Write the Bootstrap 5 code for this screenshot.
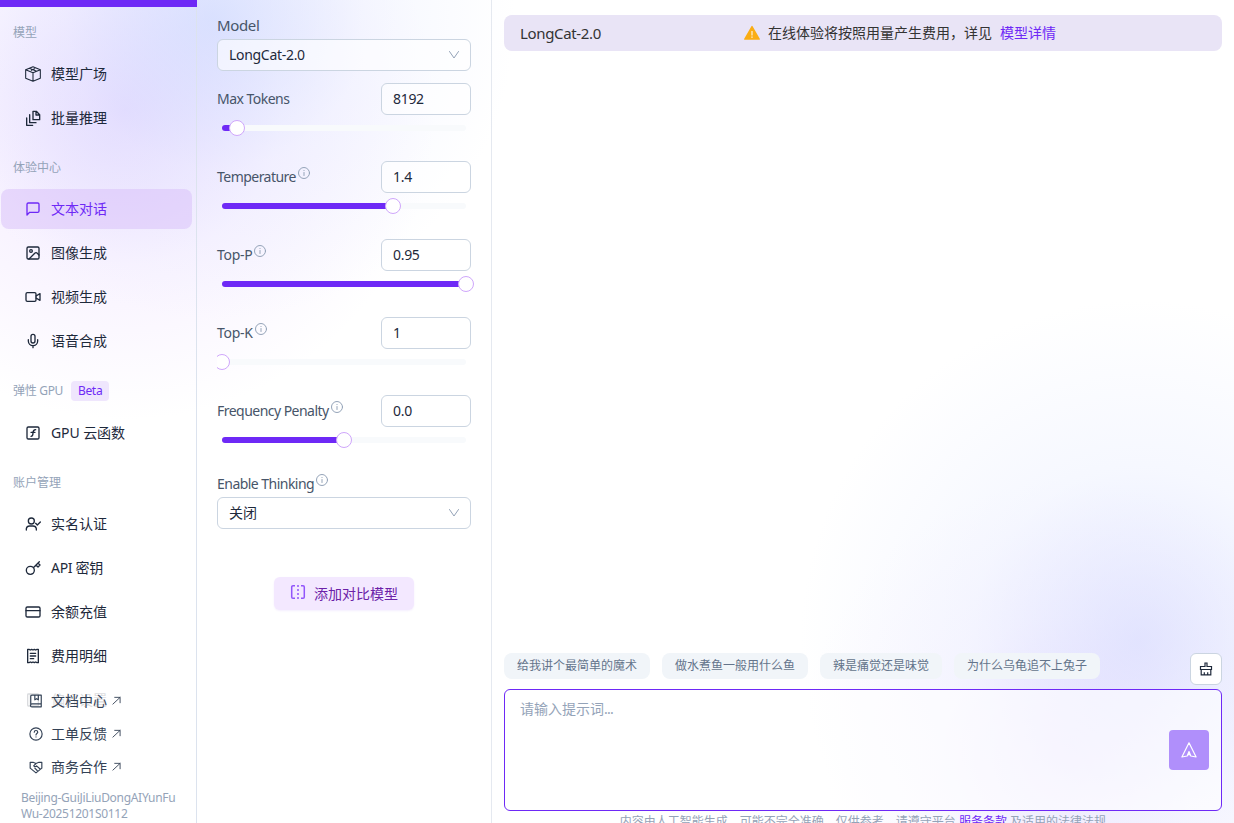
<!DOCTYPE html>
<html lang="zh-CN">
<head>
<meta charset="utf-8">
<meta name="viewport" content="width=device-width, initial-scale=1">
<title>LongCat-2.0</title>
<link href="https://cdn.jsdelivr.net/npm/bootstrap@5.3.0/dist/css/bootstrap.min.css" rel="stylesheet">
<style>
html,body{height:100%;overflow:hidden}
body{font-family:"Noto Sans","Noto Sans CJK SC",sans-serif;font-size:14px;line-height:20px;color:#1e293b;
background:
radial-gradient(circle 300px at 215px 20px,rgba(199,215,254,.6),rgba(224,231,255,.3) 50%,rgba(255,255,255,0)),
radial-gradient(circle 310px at 125px 110px,rgba(205,180,254,.5),rgba(230,210,255,.27) 50%,rgba(255,255,255,0)),
radial-gradient(circle 340px at 1140px 640px,rgba(205,210,254,.55),rgba(224,231,255,.3) 50%,rgba(255,255,255,0)),
radial-gradient(circle 270px at 1070px 750px,rgba(225,200,255,.42),rgba(240,228,255,.22) 50%,rgba(255,255,255,0)),#fff}
svg{display:block;flex:none;fill:none;stroke:currentColor;stroke-width:2;stroke-linecap:round;stroke-linejoin:round}
.side{width:197px;border-right:1px solid #dce3ee;flex:none}
.topbar{height:7px;width:197px;background:#6e29f6;flex:none}
.side-head{height:47px;padding:4px 0 0 13px;font-size:12px;color:#94a3b8;display:flex;align-items:center;flex:none}
.side-item{height:40px;margin:0 4px 4px 1px;padding-left:24px;gap:10px;display:flex;align-items:center;border-radius:8px;color:#1e293b;text-decoration:none;flex:none}
.side-item svg{width:16px;height:16px}
.side-item.active{background:rgba(216,190,250,.5);color:#6e29f6}
.side-item.fading{opacity:.16;margin-bottom:-40px}
.thin{stroke-width:1.6}
.beta{font-size:12px;background:#efe6fd;color:#6e29f6;border-radius:4px;height:20px;width:38px;margin-left:8px;text-align:center;letter-spacing:-.3px}
.foot-link{height:33px;padding-left:29px;gap:8px;display:flex;align-items:center;color:#334155;text-decoration:none;flex:none;position:relative}
.foot-link svg{width:14px;height:14px}
.foot-link svg.arr{width:9px;height:9px;margin-left:-3px;stroke-width:1}
.region{font-size:12px;line-height:16px;color:#94a3b8;padding:7px 0 1px 21px;letter-spacing:-.3px}
.conf{width:295px;border-right:1px solid #e5e9f0;padding:15px 20px 0;flex:none;color:#475569}
.lat{letter-spacing:-.3px}
.lbl{letter-spacing:-.53px}
.name{font-size:15px;letter-spacing:-.35px}
.box{height:32px;border:1px solid #cbd5e1;border-radius:6px;padding:0 10px 0 11px;display:flex;align-items:center;color:#1e293b;background:rgba(255,255,255,.6)}
.num{width:90px}
.chev{width:12px;height:12px;stroke:#94a3b8;stroke-width:1}
.param{height:78px}
.info{width:12px;height:12px;stroke:#94a3b8;stroke-width:1;margin:-9px 0 0 2px}
.slide{height:6px;margin:10px 5px 0;border-radius:3px;background:#f8fafc;position:relative}
.slide-fill{height:6px;border-radius:3px;background:#6e29f6}
.knob{position:absolute;top:-5px;width:16px;height:16px;margin-left:-8px;border-radius:50%;background:#fff;border:1px solid #cfa6fb}
.knob.start{clip-path:inset(0 0 0 3px)}
.think{height:24px;padding-bottom:2px}
.add{width:140px;height:33px;background:#f3e8ff;color:#6b21a8;border-radius:6px;gap:8px;box-shadow:0 1px 2px rgba(110,41,246,.08)}
.split{width:16px;height:16px;stroke:#9155fb;stroke-width:1.5;stroke-linecap:butt;margin-top:-3px}
.main{padding:15px 12px 0 12px;min-width:0}
.banner{height:36px;border-radius:8px;background:#e9e4f6;color:#333;padding:0 16px}
.banner .name{width:224px}
.hint{height:26px;border-radius:8px;background:#f1f5f9;color:#64748b;font-size:12px;padding:0 13px;display:flex;align-items:center;white-space:nowrap}
.clear{width:32px;height:32px;border:1px solid #cbd5e1;border-radius:6px;background:#fff}
.ask{height:122px;border:1px solid #6e29f6;border-radius:6px;background:rgba(255,255,255,.6);color:#94a3b8;padding:9px 12px 0 15px;margin-top:4px}
.send{width:40px;height:40px;background:#b08ffb;border-radius:4px;color:#fff;margin-top:31px}
.legal{font-size:12px;line-height:18px;height:10px;color:#94a3b8;margin-top:2px;white-space:nowrap}
.purple{color:#6e29f6;text-decoration:none}
</style>
</head>
<body>
<div class="d-flex vh-100 overflow-hidden">
<nav class="side d-flex flex-column">
  <div class="topbar"></div>
  <div class="side-head">模型</div>
  <a class="side-item" href="#"><svg class="thin" viewBox="0 0 24 24"><path d="M12 1 23 5.500v13L12 23 1 18.500V5.500zM1 5.500 12 10l11-4.500M12 10v13M6.500 3.500l11 4.300M9.500 6.500l5-2.500"/></svg>模型广场</a>
  <a class="side-item" href="#"><svg viewBox="0 0 24 24"><path d="M12 2h5l5 5v7.500H12zM16.500 2v5.500H22M7 7v12h9.500M2.500 12v11h9"/></svg>批量推理</a>
  <div class="side-head">体验中心</div>
  <a class="side-item active" href="#"><svg viewBox="0 0 24 24"><path d="M3 21V5a2 2 0 0 1 2-2h14a2 2 0 0 1 2 2v10a2 2 0 0 1-2 2H7z"/></svg>文本对话</a>
  <a class="side-item" href="#"><svg viewBox="0 0 24 24"><rect x="3" y="3" width="18" height="18" rx="2"/><circle cx="9" cy="9" r="2"/><path d="m21 15-3-3a2 2 0 0 0-3 0l-9 9"/></svg>图像生成</a>
  <a class="side-item" href="#"><svg viewBox="0 0 24 24"><rect x="1.500" y="5.500" width="15" height="13" rx="2"/><path d="m16.500 10.500 6-3.500v10l-6-3.500"/></svg>视频生成</a>
  <a class="side-item" href="#"><svg viewBox="0 0 24 24"><rect x="9" y="2" width="6" height="13" rx="3"/><path d="M5 10v2a7 7 0 0 0 14 0v-2M12 19v3"/></svg>语音合成</a>
  <div class="side-head" style="height:48px"><span class="lat">弹性 GPU</span><span class="beta">Beta</span></div>
  <a class="side-item" href="#"><svg viewBox="0 0 24 24"><rect x="3" y="3" width="18" height="18" rx="2"/><path d="M9 17c3 0 3-2 3-5s1-5 4-5M9 11h6"/></svg><span style="letter-spacing:-.1px">GPU 云函数</span></a>
  <div class="side-head">账户管理</div>
  <a class="side-item" href="#"><svg viewBox="0 0 24 24"><circle cx="9.500" cy="7.500" r="4.500"/><path d="M2 21v-2a5 5 0 0 1 5-4h5a5 5 0 0 1 5 4v2M16 11l2.500 2.500L23 9"/></svg>实名认证</a>
  <a class="side-item" href="#"><svg viewBox="0 0 24 24"><circle cx="8" cy="15.500" r="6"/><path d="M12.500 11.500 21.500 2.500M16.500 7.500l3 3 3-3-3-3"/></svg><span class="lat">API 密钥</span></a>
  <a class="side-item" href="#"><svg viewBox="0 0 24 24"><rect x="1.500" y="4.500" width="21" height="15" rx="2"/><path d="M1.500 10h21"/></svg>余额充值</a>
  <a class="side-item" href="#"><svg viewBox="0 0 24 24"><path d="M4 2v20h2l2-1 2 1 2-1 2 1 2-1 2 1h2V2h-2l-2 1-2-1-2 1-2-1-2 1-2-1zM8 8h8M8 12h8M8 16h5"/></svg>费用明细</a>
  <a class="side-item fading" href="#"><svg viewBox="0 0 24 24"><rect x="4" y="3" width="16" height="18" rx="1"/><path d="M8 3v18"/></svg>偏好设置</a>
  <div class="mt-auto">
    <a class="foot-link" href="#"><svg viewBox="0 0 24 24"><path d="M3 19V4a2 2 0 0 1 2-2h16v20H5a2 2 0 0 1 0-5h16M10 2v8l3-2 3 2V2"/></svg>文档中心<svg class="arr" viewBox="0 0 10 10"><path d="M1 9 9 1.500M3 1.500h6v6"/></svg></a>
    <a class="foot-link" href="#"><svg viewBox="0 0 24 24"><circle cx="12" cy="12" r="10.500"/><path d="M9 9a3 3 0 0 1 6 0c0 2-3 2.500-3 4.500M12 17v.2"/></svg>工单反馈<svg class="arr" viewBox="0 0 10 10"><path d="M1 9 9 1.500M3 1.500h6v6"/></svg></a>
    <a class="foot-link" href="#"><svg viewBox="0 0 24 24"><path d="M2 4h5l5 2 5-2h5v10l-10 8-10-8zM12 6 8 10c2 2 4 1 5 0l6 5.500M10 14l4 4"/></svg>商务合作<svg class="arr" viewBox="0 0 10 10"><path d="M1 9 9 1.500M3 1.500h6v6"/></svg></a>
    <div class="region">Beijing-GuiJiLiuDongAIYunFu<br>Wu-20251201S0112</div>
  </div>
</nav>

<section class="conf">
  <div class="name" style="height:24px">Model</div>
  <div class="box justify-content-between lat"><span>LongCat-2.0</span><svg class="chev" viewBox="0 0 12 12"><path d="m1.500 2.500 4.500 6.500 4.500-6.500"/></svg></div>
  <div class="param" style="margin-top:12px"><div class="d-flex justify-content-between align-items-center"><span class="lbl">Max Tokens</span><div class="box num lat">8192</div></div>
    <div class="slide"><div class="slide-fill" style="width:6%"></div><i class="knob" style="left:6%"></i></div></div>
  <div class="param"><div class="d-flex justify-content-between align-items-center"><span class="d-flex align-items-center"><span class="lbl">Temperature</span><svg class="info" viewBox="0 0 12 12"><circle cx="6" cy="6" r="5.500"/><path d="M6 5.500v3M6 3.400v.1"/></svg></span><div class="box num lat">1.4</div></div>
    <div class="slide"><div class="slide-fill" style="width:70%"></div><i class="knob" style="left:70%"></i></div></div>
  <div class="param"><div class="d-flex justify-content-between align-items-center"><span class="d-flex align-items-center"><span class="lat">Top-P</span><svg class="info" viewBox="0 0 12 12"><circle cx="6" cy="6" r="5.500"/><path d="M6 5.500v3M6 3.400v.1"/></svg></span><div class="box num lat">0.95</div></div>
    <div class="slide"><div class="slide-fill" style="width:100%"></div><i class="knob" style="left:100%"></i></div></div>
  <div class="param"><div class="d-flex justify-content-between align-items-center"><span class="d-flex align-items-center"><span class="lat">Top-K</span><svg class="info" viewBox="0 0 12 12"><circle cx="6" cy="6" r="5.500"/><path d="M6 5.500v3M6 3.400v.1"/></svg></span><div class="box num lat">1</div></div>
    <div class="slide"><i class="knob start" style="left:0%"></i></div></div>
  <div class="param"><div class="d-flex justify-content-between align-items-center"><span class="d-flex align-items-center"><span class="lbl">Frequency Penalty</span><svg class="info" viewBox="0 0 12 12"><circle cx="6" cy="6" r="5.500"/><path d="M6 5.500v3M6 3.400v.1"/></svg></span><div class="box num lat">0.0</div></div>
    <div class="slide"><div class="slide-fill" style="width:50%"></div><i class="knob" style="left:50%"></i></div></div>
  <div class="think d-flex align-items-center"><span class="lbl">Enable Thinking</span><svg class="info" viewBox="0 0 12 12"><circle cx="6" cy="6" r="5.500"/><path d="M6 5.500v3M6 3.400v.1"/></svg></div>
  <div class="box justify-content-between"><span>关闭</span><svg class="chev" viewBox="0 0 12 12"><path d="m1.500 2.500 4.500 6.500 4.500-6.500"/></svg></div>
  <div class="add d-flex align-items-center justify-content-center mx-auto mt-5"><svg class="split" viewBox="0 0 16 16"><path d="M5 1.700H3a1.300 1.300 0 0 0-1.300 1.300v10A1.300 1.300 0 0 0 3 14.300h2M11 1.700h2A1.300 1.300 0 0 1 14.300 3v10a1.300 1.300 0 0 1-1.300 1.300h-2M8 1v2M8 5v2M8 9v2M8 13v2"/></svg>添加对比模型</div>
</section>

<main class="main flex-fill d-flex flex-column">
  <div class="banner d-flex align-items-center"><span class="name">LongCat-2.0</span>
    <svg width="16" height="16" viewBox="0 0 16 16" style="stroke:none"><path fill="#faad14" d="M7.400 1.200a.7.700 0 0 1 1.200 0l7.200 12.500a.7.700 0 0 1-.6 1.100H.8a.7.700 0 0 1-.6-1.100z"/><path fill="#fff" d="M7.500 6h1v4.500h-1zM7.400 11.500h1.200v1.300H7.400z"/></svg>
    <span class="ms-2">在线体验将按照用量产生费用，详见</span><a class="purple ms-2" href="#">模型详情</a></div>
  <div class="d-flex mt-auto" style="gap:12px;height:32px"><span class="hint">给我讲个最简单的魔术</span><span class="hint">做水煮鱼一般用什么鱼</span><span class="hint">辣是痛觉还是味觉</span><span class="hint">为什么乌龟追不上兔子</span>
    <div class="clear ms-auto d-flex align-items-center justify-content-center"><svg width="14" height="14" viewBox="0 0 14 14" style="stroke-width:1.200;stroke-linejoin:miter;stroke-linecap:butt"><path d="M6 4.500V1h2v3.500h4.500v3h-11v-3zM2.200 7.500v5.300h9.600V7.500M5.300 10.300v2.500M8.700 10.300v2.500"/></svg></div></div>
  <div class="ask d-flex justify-content-between"><span>请输入提示词<span style="letter-spacing:-.8px">...</span></span><div class="send d-flex align-items-center justify-content-center"><svg width="16" height="16" viewBox="0 0 16 16" style="stroke-width:1.200"><path d="M8 .8.900 15l5.300-1L8 9.500 9.800 14l5.300 1zM8 9.500V13"/></svg></div></div>
  <div class="legal text-center">内容由人工智能生成，可能不完全准确，仅供参考，请遵守平台 <a class="purple" href="#">服务条款</a> 及适用的法律法规</div>
</main>
</div>
<script src="https://cdn.jsdelivr.net/npm/bootstrap@5.3.0/dist/js/bootstrap.bundle.min.js"></script>
</body>
</html>
